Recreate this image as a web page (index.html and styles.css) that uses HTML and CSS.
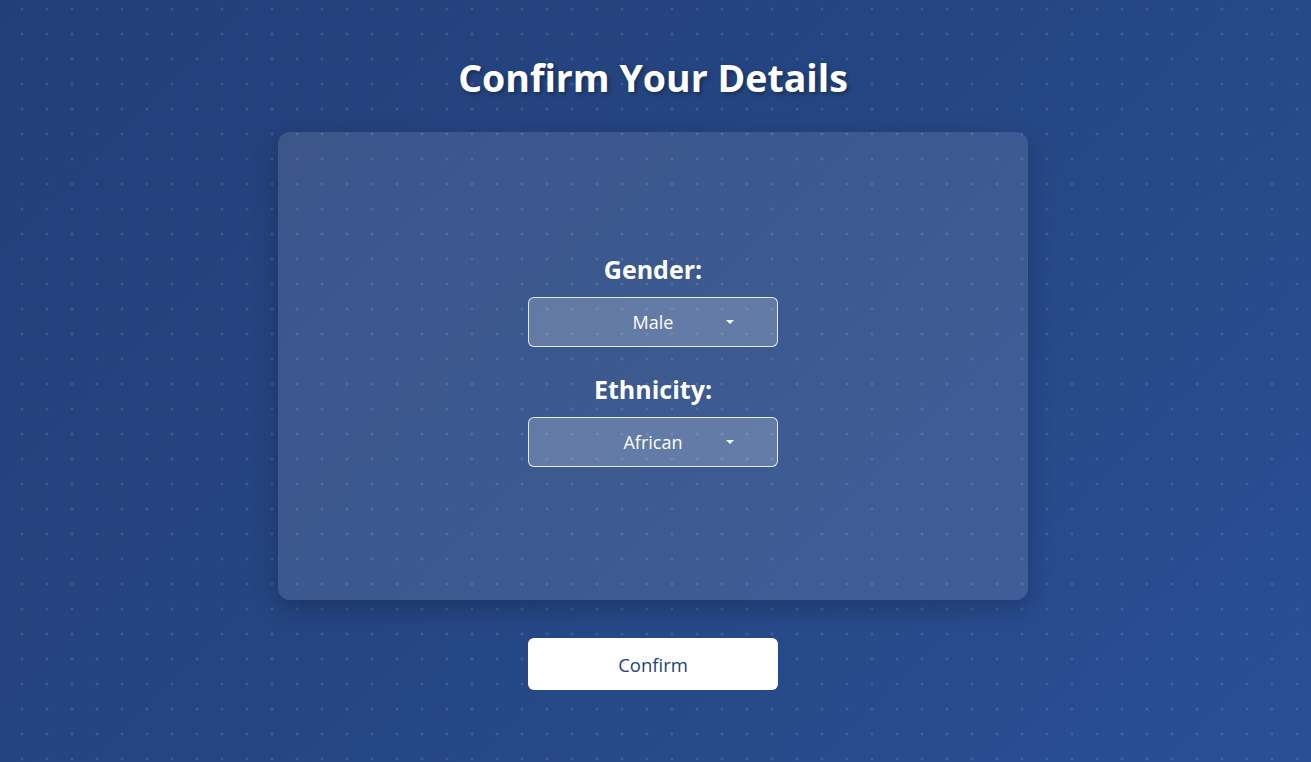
FILE: index.html
```html
<!DOCTYPE html>
<html lang="en">
<head>
<meta charset="utf-8">
<title>Confirm Your Details</title>
<link rel="stylesheet" href="styles.css">
</head>
<body>
<main class="page">
  <h1 class="title">Confirm Your Details</h1>
  <section class="card">
    <div class="field">
      <label class="field-label">Gender:</label>
      <div class="select-box">
        <span class="select-value">Male</span>
        <span class="caret"></span>
      </div>
    </div>
    <div class="field">
      <label class="field-label">Ethnicity:</label>
      <div class="select-box">
        <span class="select-value">African</span>
        <span class="caret"></span>
      </div>
    </div>
  </section>
  <button class="confirm-btn" type="button">Confirm</button>
</main>
</body>
</html>
```
FILE: styles.css
```css
html, body {
  margin: 0;
  padding: 0;
  height: 100%;
}
body {
  font-family: "Open Sans", "Noto Sans", sans-serif;
  color: #fff;
  background-color: #244480;
  background-image:
    radial-gradient(circle, rgba(255,255,255,0.14) 1px, transparent 1.5px),
    linear-gradient(135deg, #233f7a 0%, #254683 50%, #2a4f95 100%);
  background-size: 25px 25px, 100% 100%;
  background-position: 9.5px -3.5px, 0 0;
  overflow: hidden;
}
.page {
  display: flex;
  flex-direction: column;
  align-items: center;
  padding-top: 55px;
  padding-right: 5px;
}
.title {
  margin: 0;
  font-size: 37.5px;
  line-height: 46px;
  font-weight: 700;
  text-shadow: 2px 2px 4px rgba(0,0,0,0.35);
}
.card {
  margin-top: 31px;
  width: 750px;
  height: 468px;
  box-sizing: border-box;
  padding-bottom: 11px;
  border-radius: 12px;
  background: rgba(255,255,255,0.11);
  box-shadow: 0 8px 24px rgba(0,0,0,0.22);
  display: flex;
  flex-direction: column;
  align-items: center;
  justify-content: center;
}
.field {
  display: flex;
  flex-direction: column;
  align-items: center;
}
.field + .field {
  margin-top: 27px;
}
.field-label {
  font-size: 25px;
  line-height: 30px;
  font-weight: 700;
  margin-bottom: 13px;
}
.select-box {
  position: relative;
  width: 250px;
  height: 50px;
  box-sizing: border-box;
  border: 1px solid rgba(255,255,255,0.85);
  border-radius: 6px;
  background: rgba(255,255,255,0.2);
  display: flex;
  align-items: center;
  justify-content: center;
  font-size: 18px;
}
.caret {
  position: absolute;
  right: 43px;
  top: 22px;
  width: 0;
  height: 0;
  border-left: 4px solid transparent;
  border-right: 4px solid transparent;
  border-top: 4px solid #fff;
}
.confirm-btn {
  margin-top: 38px;
  width: 250px;
  height: 52px;
  border: none;
  border-radius: 6px;
  background: #fff;
  color: #23427c;
  font-family: inherit;
  font-size: 18.5px;
  cursor: pointer;
}
```
